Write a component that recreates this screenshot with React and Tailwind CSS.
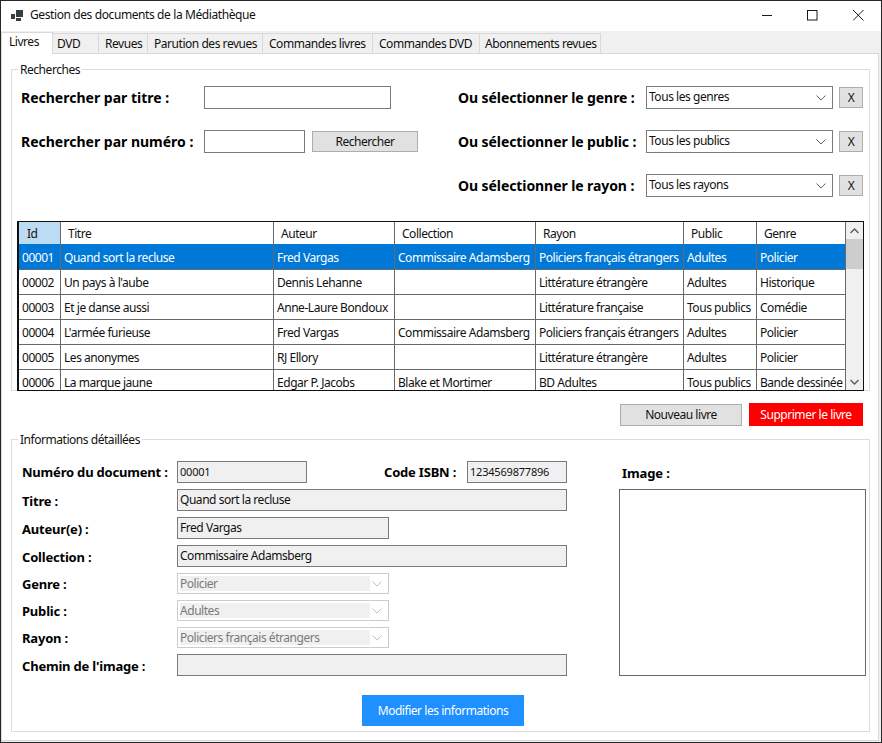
const tabs = [
  { label: "Livres", w: "w-[52px]", active: true },
  { label: "DVD", w: "w-[46px]", pad: "pl-[4px]" },
  { label: "Revues", w: "w-[49px]", pad: "pl-[6px]" },
  { label: "Parution des revues", w: "w-[115px]", pad: "pl-[6px]" },
  { label: "Commandes livres", w: "w-[110px]", pad: "pl-[6px]" },
  { label: "Commandes DVD", w: "w-[107px]", pad: "pl-[6px]" },
  { label: "Abonnements revues", w: "w-[121px]", pad: "pl-[5px]" },
];

const headers = ["Id", "Titre", "Auteur", "Collection", "Rayon", "Public", "Genre"];

const books = [
  ["00001", "Quand sort la recluse", "Fred Vargas", "Commissaire Adamsberg", "Policiers français étrangers", "Adultes", "Policier"],
  ["00002", "Un pays à l'aube", "Dennis Lehanne", "", "Littérature étrangère", "Adultes", "Historique"],
  ["00003", "Et je danse aussi", "Anne-Laure Bondoux", "", "Littérature française", "Tous publics", "Comédie"],
  ["00004", "L'armée furieuse", "Fred Vargas", "Commissaire Adamsberg", "Policiers français étrangers", "Adultes", "Policier"],
  ["00005", "Les anonymes", "RJ Ellory", "", "Littérature étrangère", "Adultes", "Policier"],
  ["00006", "La marque jaune", "Edgar P. Jacobs", "Blake et Mortimer", "BD Adultes", "Tous publics", "Bande dessinée"],
];

const gridCols = "grid grid-cols-[42px_213px_121px_141px_148px_73px_89px]";

function Chevron({ color = "#606060" }) {
  return (
    <svg width="10" height="6" viewBox="0 0 10 6" fill="none" stroke={color} strokeWidth="1">
      <path d="M0.5 0.5 L5 5 L9.5 0.5" />
    </svg>
  );
}

function Combo({ value }) {
  return (
    <div className="w-[187px] h-[23px] border border-[#7a7a7a] bg-white flex items-center justify-between pl-[2px] pr-[6px] pb-[1px]">
      <span>{value}</span>
      <span className="pt-[2px]"><Chevron /></span>
    </div>
  );
}

function ClearButton() {
  return (
    <button className="w-[24px] h-[21px] ml-[6px] border border-[#adadad] bg-[#e1e1e1]">X</button>
  );
}

function FilterRow({ label, value }) {
  return (
    <div className="h-[23px] flex items-center">
      <span className="w-[188px] text-[14px] font-bold text-black tracking-[-0.08px] whitespace-nowrap">{label}</span>
      <Combo value={value} />
      <ClearButton />
    </div>
  );
}

function Field({ width, value, small }) {
  return (
    <div className={`${width} h-[22px] border border-[#7a7a7a] bg-[#f0f0f0] pl-[2px] leading-[20px] ${small ? "text-[11px] tracking-[-0.2px]" : ""}`}>
      {value}
    </div>
  );
}

function DisabledCombo({ value }) {
  return (
    <div className="w-[212px] h-[21px] border border-[#cccccc] bg-white flex items-center pl-[2px] pr-[6px] text-[#6d6d6d]">
      <span className="w-[190px] h-[15px] bg-[#f0f0f0] leading-[15px] text-[#7a7a7a]">{value}</span>
      <span className="ml-auto"><Chevron color="#bfbfbf" /></span>
    </div>
  );
}

function DetailRow({ label, children, className = "", labelClass = "pt-[4px]" }) {
  return (
    <div className={`flex items-center ${className}`}>
      <span className={`w-[155px] text-[13px] font-bold text-black tracking-[-0.2px] whitespace-nowrap ${labelClass}`}>{label}</span>
      {children}
    </div>
  );
}

function BookTable() {
  return (
    <div className="w-[847px] h-[170px] ml-[5px] border-y border-r border-l-2 border-[#101010] bg-white flex overflow-hidden relative z-10">
      <div className="w-[827px] shrink-0">
        <div className={`${gridCols} h-[22px]`}>
          {headers.map((h, i) => (
            <div key={h} className={`border-r border-[#696969] pt-[2px] leading-[20px] ${i === 0 ? "bg-[#bcdcf4] pl-[8px]" : "pl-[7px]"}`}>
              {h}
            </div>
          ))}
        </div>
        {books.map((row, r) => (
          <div key={row[0]} className={`${gridCols} border-b border-[#696969] ${r === 0 ? "h-[26px] pt-[1px] bg-[#0078d7] text-white" : "h-[25px]"}`}>
            {row.map((cell, c) => (
              <div key={c} className="border-r border-[#696969] pl-[3px] pt-[2px] leading-[22px] whitespace-nowrap overflow-hidden">
                {cell}
              </div>
            ))}
          </div>
        ))}
      </div>
      <div className="w-[17px] bg-[#f0f0f0] flex flex-col items-center">
        <div className="h-[17px] flex items-center justify-center">
          <svg width="9" height="6" viewBox="0 0 9 6" fill="none" stroke="#606060" strokeWidth="1.5"><path d="M0.5 5 L4.5 1 L8.5 5" /></svg>
        </div>
        <div className="w-full h-[30px] bg-[#cdcdcd]" />
        <div className="mt-auto h-[17px] flex items-center justify-center">
          <svg width="9" height="6" viewBox="0 0 9 6" fill="none" stroke="#606060" strokeWidth="1.5"><path d="M0.5 1 L4.5 5 L8.5 1" /></svg>
        </div>
      </div>
    </div>
  );
}

function Group({ title, className, children }) {
  return (
    <div className={`relative ml-[9px] mr-[8px] border border-[#dcdcdc] ${className}`}>
      <span className="absolute left-[6px] top-[-8px] bg-white px-[2px] leading-[15px] whitespace-nowrap">{title}</span>
      {children}
    </div>
  );
}

export default function App() {
  return (
    <div className="w-[882px] h-[743px] border border-[#262626] bg-[#f0f0f0] text-[12px] text-[#111111] font-['Noto_Sans',sans-serif] tracking-[-0.46px] overflow-hidden flex flex-col">
      <div className="h-[30px] shrink-0 bg-white flex items-center pb-[2px]">
        <svg className="ml-[10px]" width="12" height="11" viewBox="0 0 12 11" fill="#3c3c3c">
          <rect x="0" y="4" width="4" height="5" />
          <rect x="5" y="0" width="7" height="7" />
          <rect x="5" y="8" width="5" height="3" />
        </svg>
        <span className="ml-[7px] text-[12px] tracking-[-0.4px]">Gestion des documents de la Médiathèque</span>
        <div className="ml-auto flex items-center mr-[17px]">
          <svg width="11" height="11" viewBox="0 0 11 11" stroke="#1a1a1a" fill="none"><path d="M0 5.5 H10" /></svg>
          <svg className="ml-[34px]" width="11" height="11" viewBox="0 0 11 11" stroke="#1a1a1a" fill="none"><rect x="0.5" y="0.5" width="9.5" height="9.5" /></svg>
          <svg className="ml-[35px]" width="11" height="11" viewBox="0 0 11 11" stroke="#1a1a1a" fill="none"><path d="M0 0 L10.5 10.5 M10.5 0 L0 10.5" /></svg>
        </div>
      </div>

      <div className="h-[22px] shrink-0 flex items-end">
        {tabs.map((t) => (
          <div
            key={t.label}
            className={`${t.w} border-t border-r border-[#d9d9d9] whitespace-nowrap ${t.active ? "h-[22px] bg-white pl-[7px] leading-[18px] relative z-10 border-l -mb-[1px]" : `h-[20px] ${t.pad} leading-[20px]`}`}
          >
            {t.label}
          </div>
        ))}
      </div>

      <div className="flex-1 mr-[2px] mb-[1px] border border-[#d9d9d9] bg-white pt-[15px]">
        <Group title="Recherches" className="h-[322px]">
          <div className="flex pt-[16px] pl-[9px] h-[151px]">
            <div className="w-[437px] flex flex-col gap-[21px]">
              <div className="h-[23px] flex items-center">
                <span className="w-[183px] text-[14px] font-bold text-black whitespace-nowrap tracking-[0px]">Rechercher par titre :</span>
                <div className="w-[187px] h-[23px] border border-[#7a7a7a]" />
              </div>
              <div className="h-[23px] flex items-center">
                <span className="w-[183px] text-[14px] font-bold text-black whitespace-nowrap tracking-[0px]">Rechercher par numéro :</span>
                <div className="w-[101px] h-[23px] border border-[#7a7a7a]" />
                <button className="w-[106px] h-[21px] ml-[7px] border border-[#adadad] bg-[#e1e1e1]">Rechercher</button>
              </div>
            </div>
            <div className="flex flex-col gap-[21px]">
              <FilterRow label="Ou sélectionner le genre :" value="Tous les genres" />
              <FilterRow label="Ou sélectionner le public :" value="Tous les publics" />
              <FilterRow label="Ou sélectionner le rayon :" value="Tous les rayons" />
            </div>
          </div>
          <BookTable />
        </Group>

        <div className="h-[48px] flex justify-end items-center pr-[15px] pb-[1px] gap-[7px]">
          <button className="w-[122px] h-[22px] border border-[#adadad] bg-[#e1e1e1]">Nouveau livre</button>
          <button className="w-[114px] h-[23px] bg-[#ff0000] text-white">Supprimer le livre</button>
        </div>

        <Group title="Informations détaillées" className="h-[293px]">
          <div className="flex pl-[10px] pt-[21px]">
            <div className="w-[597px] shrink-0 flex flex-col">
              <DetailRow label="Numéro du document :" className="h-[22px]" labelClass="pt-[2px]">
                <Field width="w-[130px]" value="00001" small />
                <span className="ml-[77px] w-[83px] pt-[2px] text-[13px] font-bold text-black tracking-[-0.2px] whitespace-nowrap">Code ISBN :</span>
                <Field width="w-[100px]" value="1234569877896" small />
              </DetailRow>
              <DetailRow label="Titre :" className="h-[22px] mt-[6px]"><Field width="w-[390px]" value="Quand sort la recluse" /></DetailRow>
              <DetailRow label="Auteur(e) :" className="h-[22px] mt-[6px]"><Field width="w-[212px]" value="Fred Vargas" /></DetailRow>
              <DetailRow label="Collection :" className="h-[22px] mt-[6px]"><Field width="w-[390px]" value="Commissaire Adamsberg" /></DetailRow>
              <DetailRow label="Genre :" className="h-[21px] mt-[6px]" labelClass="pt-[2px]"><DisabledCombo value="Policier" /></DetailRow>
              <DetailRow label="Public :" className="h-[21px] mt-[6px]" labelClass="pt-[2px]"><DisabledCombo value="Adultes" /></DetailRow>
              <DetailRow label="Rayon :" className="h-[21px] mt-[6px]" labelClass="pt-[2px]"><DisabledCombo value="Policiers français étrangers" /></DetailRow>
              <DetailRow label="Chemin de l'image :" className="h-[22px] mt-[6px]"><Field width="w-[390px]" value="" /></DetailRow>
              <button className="w-[162px] h-[31px] mt-[19px] ml-[340px] pt-[1px] bg-[#1e90ff] text-white">Modifier les informations</button>
            </div>
            <div className="flex flex-col">
              <span className="h-[28px] pl-[3px] pt-[1px] text-[13px] font-bold text-black tracking-[-0.1px] leading-[22px]">Image :</span>
              <div className="w-[247px] h-[187px] border border-[#696969]" />
            </div>
          </div>
        </Group>
      </div>
    </div>
  );
}
